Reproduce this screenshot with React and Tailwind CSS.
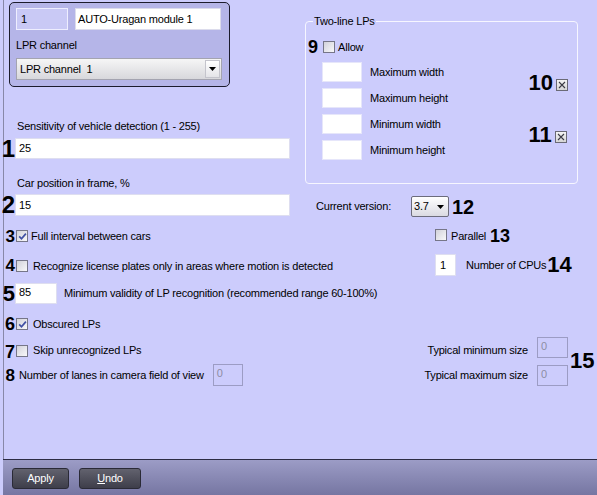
import React from 'react';

function Num({ children, className }) {
  return (
    <span className={'w-[11px] shrink-0 flex justify-end font-bold leading-none tracking-normal ' + className}>
      {children}
    </span>
  );
}

function Check({ checked, className = '' }) {
  return (
    <span className={'w-[12px] h-[12px] shrink-0 border border-[#767688] bg-linear-to-br from-[#d2d2da] to-[#f8f8fa] flex items-center justify-center ' + className}>
      {checked && (
        <svg width="9" height="9" viewBox="0 0 9 9">
          <path d="M1.2 4.4 L3.5 6.8 L7.9 1.6" fill="none" stroke="#4050a4" strokeWidth="1.7" />
        </svg>
      )}
    </span>
  );
}

function XBox({ className = '' }) {
  return (
    <span className={'w-[12px] h-[12px] shrink-0 border border-[#6a6a76] bg-linear-to-b from-[#f4f4f4] to-[#d6d6d6] flex items-center justify-center ' + className}>
      <svg width="8" height="8" viewBox="0 0 8 8">
        <path d="M1 1 L7 7 M7 1 L1 7" stroke="#3a3a44" strokeWidth="1.1" />
      </svg>
    </span>
  );
}

function Field({ children, className = '' }) {
  return (
    <div className={'shrink-0 bg-white border border-[#dedef0] flex items-center pl-[3px] ' + className}>
      {children}
    </div>
  );
}

function Disabled({ className = '' }) {
  return (
    <div className={'shrink-0 border border-[#9c9cc4] flex items-start pl-[3px] pt-[2px] text-[#8c8ca4] ' + className}>
      0
    </div>
  );
}

export default function App() {
  return (
    <div className="w-[597px] h-[495px] bg-[#ccccfc] flex flex-col pl-[3px] font-['Liberation_Sans',Arial,sans-serif] text-[11px] tracking-[-0.2px] leading-[13px] text-black overflow-hidden">
      <div className="flex-1 border-l border-[#8888a8] flex flex-col">
        {/* top: module box + two-line group */}
        <div className="flex">
          <div className="w-[301px] shrink-0 flex flex-col">
            <div className="mt-[2px] ml-[5px] w-[221px] h-[85px] rounded-[5px] border border-[#1c1c2c] bg-[#b5b5e8] pl-[6px] pt-[5px]">
              <div className="flex gap-[7px]">
                <div className="w-[52px] h-[22px] border border-[#eeeeff] bg-[#c9c9f5] flex items-center pl-[4px]">1</div>
                <div className="w-[146px] h-[22px] border border-[#dcdcec] bg-white flex items-center pl-[2px]">AUTO-Uragan module 1</div>
              </div>
              <div className="mt-[9px]">LPR channel</div>
              <div className="mt-[6px] w-[206px] h-[22px] border border-[#a4a4b0] bg-linear-to-b from-[#f6f6f6] to-[#d8d8dc] flex items-center pl-[3px] pr-[1px]">
                <span className="whitespace-pre">LPR channel  1</span>
                <span className="ml-auto w-[15px] h-[18px] border border-[#c4c4cc] bg-linear-to-b from-white to-[#e4e4e8] flex items-center justify-center">
                  <svg width="7" height="4" viewBox="0 0 7 4"><path d="M0 0 H7 L3.5 4 Z" fill="#000" /></svg>
                </span>
              </div>
            </div>
            <div className="mt-[33px] pl-[13px]">Sensitivity of vehicle detection (1 - 255)</div>
            <div className="mt-[5px] flex items-center h-[21px]">
              <Num className="text-[24px]">1</Num>
              <Field className="w-[275px] h-[21px]">25</Field>
            </div>
            <div className="mt-[18px] pl-[13px]">Car position in frame, %</div>
            <div className="mt-[4px] flex items-center h-[22px]">
              <Num className="text-[24px]">2</Num>
              <Field className="w-[275px] h-[22px]">15</Field>
            </div>
          </div>

          <div className="flex flex-col">
            <div className="mt-[21px] w-[273px] h-[163px] relative border border-[#f6f6ff] rounded-[4px] flex flex-col">
              <span className="absolute left-[7px] -top-[7px] px-[1px] bg-[#ccccfc]">Two-line LPs</span>
              <div className="mt-[16px] pl-[2px] h-[18px] flex items-center">
                <span className="font-bold text-[18px] leading-none tracking-normal">9</span>
                <Check className="ml-[5px]" />
                <span className="ml-[3px]">Allow</span>
              </div>
              <div className="mt-[6px] flex">
                <div className="pl-[16px] flex flex-col gap-[6px]">
                  {['Maximum width', 'Maximum height', 'Minimum width', 'Minimum height'].map((t) => (
                    <div key={t} className="h-[20px] flex items-center gap-[8px]">
                      <div className="w-[40px] h-[20px] bg-white border border-[#e6e6fa]" />
                      <span>{t}</span>
                    </div>
                  ))}
                </div>
                <div className="ml-auto pr-[9px] flex flex-col">
                  <div className="mt-[10px] h-[22px] flex items-center">
                    <span className="font-bold text-[22px] leading-none tracking-normal">10</span>
                    <XBox className="ml-[3px] mt-[3px]" />
                  </div>
                  <div className="mt-[30px] h-[22px] flex items-center">
                    <span className="font-bold text-[22px] leading-none tracking-normal">11</span>
                    <XBox className="ml-[3px] mt-[3px]" />
                  </div>
                </div>
              </div>
            </div>
            <div className="mt-[12px] pl-[11px] h-[21px] flex items-center">
              <span className="w-[95px] shrink-0">Current version:</span>
              <div className="w-[38px] h-[21px] rounded-[2px] border border-[#6c6c7c] bg-linear-to-b from-white to-[#dadae2] flex items-center pl-[2px] pr-[4px]">
                <span>3.7</span>
                <svg className="ml-auto" width="7" height="4" viewBox="0 0 7 4"><path d="M0 0 H7 L3.5 4 Z" fill="#000" /></svg>
              </div>
              <span className="ml-[3px] font-bold text-[20px] leading-none tracking-normal">12</span>
            </div>
          </div>
        </div>

        {/* row 3 */}
        <div className="mt-[12px] h-[14px] flex items-center">
          <div className="w-[431px] shrink-0 flex items-center">
            <Num className="text-[17px]">3</Num>
            <Check checked className="ml-[1px]" />
            <span className="ml-[3px]">Full interval between cars</span>
          </div>
          <Check className="-mt-[3px]" />
          <span className="ml-[4px]">Parallel</span>
          <span className="ml-[4px] font-bold text-[18px] leading-none tracking-normal">13</span>
        </div>

        {/* row 4 */}
        <div className="mt-[11px] h-[22px] flex items-center">
          <div className="w-[431px] shrink-0 flex items-center">
            <Num className="text-[17px]">4</Num>
            <Check className="ml-[1px] mt-[2px]" />
            <span className="ml-[5px] mt-[2px]">Recognize license plates only in areas where motion is detected</span>
          </div>
          <Field className="w-[21px] h-[22px] pl-[4px]">1</Field>
          <span className="ml-[10px]">Number of CPUs</span>
          <span className="ml-[1px] font-bold text-[22px] leading-none tracking-normal">14</span>
        </div>

        {/* row 5 */}
        <div className="mt-[7px] h-[21px] flex items-center">
          <Num className="text-[22px]">5</Num>
          <Field className="w-[42px] h-[21px] items-start pt-[2px]">85</Field>
          <span className="ml-[7px]">Minimum validity of LP recognition (recommended range 60-100%)</span>
        </div>

        {/* row 6 */}
        <div className="mt-[13px] h-[14px] flex items-center">
          <Num className="text-[18px]">6</Num>
          <Check checked className="ml-[1px]" />
          <span className="ml-[5px]">Obscured LPs</span>
        </div>

        {/* rows 7-8 */}
        <div className="mt-[5px] flex">
          <div className="w-[419px] shrink-0 flex flex-col">
            <div className="h-[22px] flex items-end">
              <Num className="text-[18px] -mb-[3px]">7</Num>
              <Check className="ml-[1px] mb-[1px]" />
              <span className="ml-[5px] mb-[1px]">Skip unrecognized LPs</span>
            </div>
            <div className="mt-[6px] h-[22px] flex items-center">
              <Num className="text-[17px]">8</Num>
              <span className="ml-[4px]">Number of lanes in camera field of view</span>
              <Disabled className="ml-[9px] w-[30px] h-[22px]" />
            </div>
          </div>
          <div className="flex flex-col">
            <div className="h-[22px] flex items-end">
              <span className="w-[105px] text-right mb-[1px]">Typical minimum size</span>
              <Disabled className="ml-[9px] w-[31px] h-[21px]" />
            </div>
            <div className="mt-[6px] h-[22px] flex items-center">
              <span className="w-[105px] text-right">Typical maximum size</span>
              <Disabled className="ml-[9px] w-[31px] h-[21px]" />
            </div>
          </div>
          <span className="self-center ml-[2px] font-bold text-[22px] leading-none tracking-normal">15</span>
        </div>
      </div>

      {/* bottom bar */}
      <div className="h-[36px] shrink-0 border-t border-[#2c2c44] bg-linear-to-b from-[#9c9cc6] to-[#7676a2] flex items-start gap-[10px] pl-[9px] pt-[8px]">
        <button className="w-[57px] h-[21px] rounded-[3px] border border-[#2a2a36] bg-linear-to-b from-[#62626e] to-[#3e3e4a] text-white text-[11px] leading-none">
          Apply
        </button>
        <button className="w-[62px] h-[21px] rounded-[3px] border border-[#2a2a36] bg-linear-to-b from-[#62626e] to-[#3e3e4a] text-white text-[11px] leading-none">
          <span className="underline">U</span>ndo
        </button>
      </div>
    </div>
  );
}
